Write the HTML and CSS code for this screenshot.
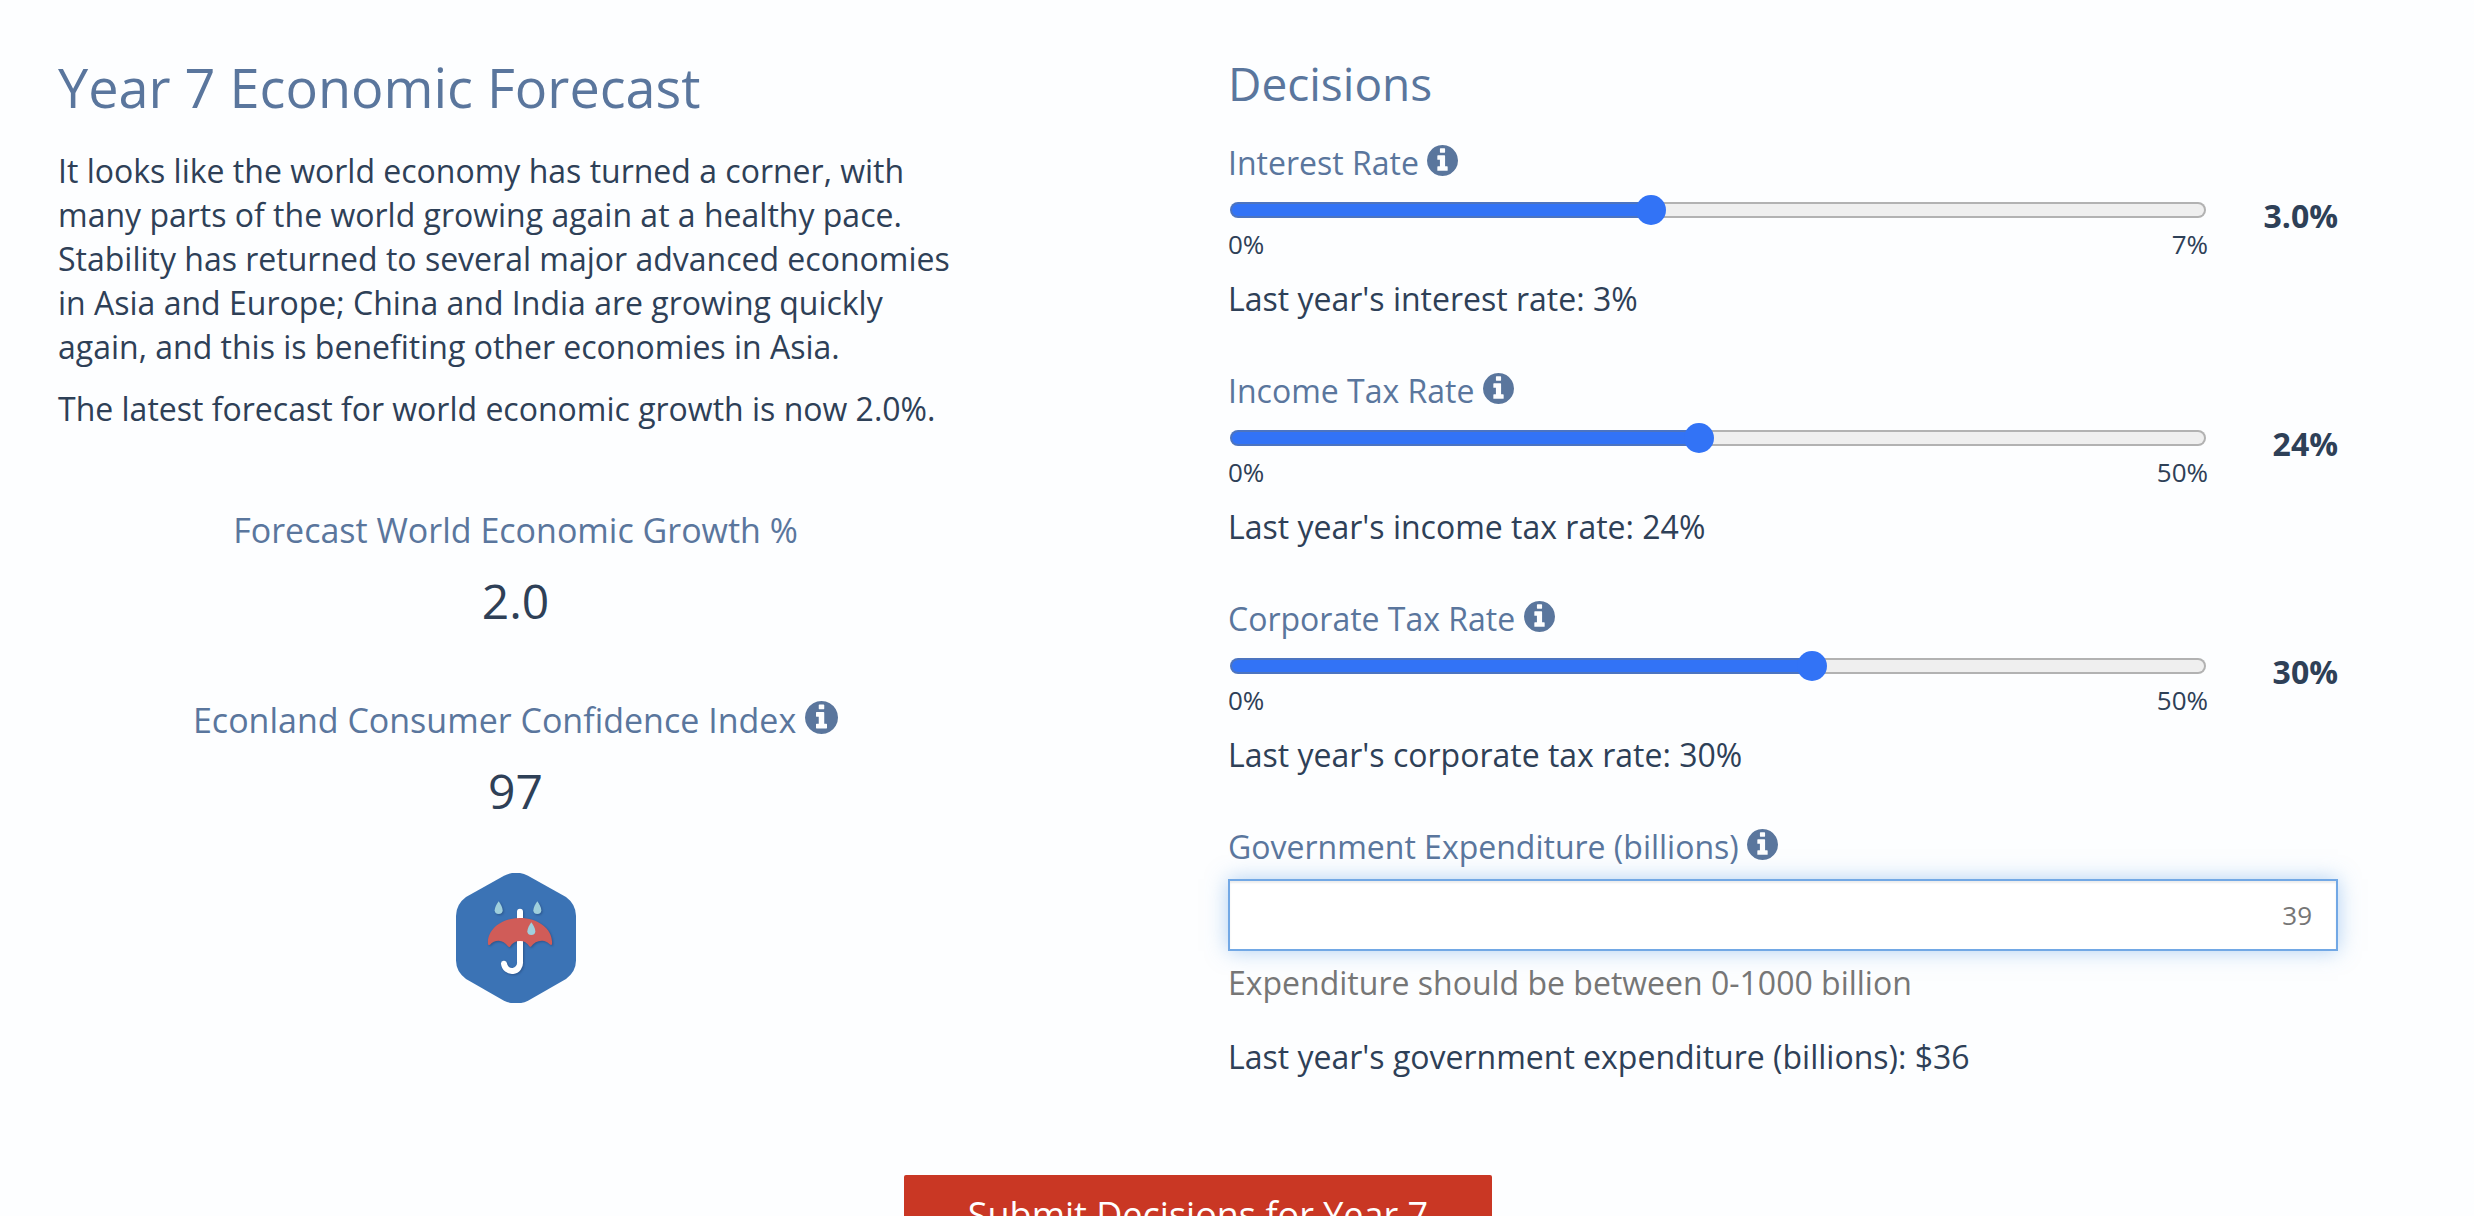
FILE: index.html
```html
<!DOCTYPE html>
<html lang="en">
<head>
<meta charset="utf-8">
<meta name="viewport" content="width=device-width, initial-scale=1">
<title>Year 7 Decisions</title>
<link rel="stylesheet" href="styles.css">
</head>
<body>
<svg class="sprite" aria-hidden="true">
  <symbol id="info" viewBox="0 128 1536 1536">
    <path d="M1024 1376v-160q0-14-9-23t-23-9h-96v-512q0-14-9-23t-23-9h-320q-14 0-23 9t-9 23v160q0 14 9 23t23 9h96v320h-96q-14 0-23 9t-9 23v160q0 14 9 23t23 9h448q14 0 23-9t9-23zm-128-896v-160q0-14-9-23t-23-9h-192q-14 0-23 9t-9 23v160q0 14 9 23t23 9h192q14 0 23-9t9-23zm640 416q0 209-103 385.5t-279.5 279.5-385.5 103-385.5-103-279.5-279.5-103-385.5 103-385.5 279.5-279.5 385.5-103 385.5 103 279.5 279.5 103 385.5z"/>
  </symbol>
</svg>
<main class="page">
  <form class="round">
    <section class="forecast">
      <h1 class="forecast-title">Year 7 Economic Forecast</h1>
      <p class="text">It looks like the world economy has turned a corner, with many parts of the world growing again at a healthy pace. Stability has returned to several major advanced economies in Asia and Europe; China and India are growing quickly again, and this is benefiting other economies in Asia.</p>
      <p class="text">The latest forecast for world economic growth is now 2.0%.</p>
      <div class="indicator">
        <h2 class="indicator-name">Forecast World Economic Growth %</h2>
        <p class="indicator-value">2.0</p>
      </div>
      <div class="indicator">
        <h2 class="indicator-name">Econland Consumer Confidence Index <button type="button" class="info" aria-label="About the consumer confidence index"><svg class="info-icon"><use href="#info"/></svg></button></h2>
        <p class="indicator-value">97</p>
      </div>
      <svg class="badge" viewBox="78 66 360 390" role="img" aria-label="Rainy outlook">
        <path fill="#3b73b5" d="M222 74Q258 56 294 74L408 138Q438 160 438 195V328Q438 362 408 384L294 449Q258 466 222 449L108 384Q78 362 78 328V195Q78 160 108 138Z"/>
        <g class="badge-art">
          <path fill="none" stroke="#fff" stroke-width="18" stroke-linecap="round" d="M270 182V332A24 25 0 0 1 222 338"/>
          <path fill="#d05c58" d="M174 280C170 235 215 201 270 201C325 201 370 235 366 280Q364 284 359 280Q348 268 335 269Q315 270 304 286Q301 289 298 286Q288 270 270 270Q250 270 240 287Q237 290 234 286Q222 270 206 269Q190 269 180 281Q175 284 174 280Z"/>
          <g fill="#9fcfdc">
            <path d="M206 151C211 158 218 170 218 178A12 11 0 0 1 194 178C194 170 201 158 206 151Z"/>
            <path d="M322 151C327 158 334 170 334 178A12 11 0 0 1 310 178C310 170 317 158 322 151Z"/>
            <path d="M304 214C309 221 316 233 316 241A12 11 0 0 1 292 241C292 233 299 221 304 214Z"/>
          </g>
        </g>
      </svg>
    </section>

    <section class="decisions">
      <h2 class="decisions-title">Decisions</h2>

      <div class="field">
        <div class="field-head"><label for="interest">Interest Rate</label> <button type="button" class="info" aria-label="About the interest rate"><svg class="info-icon"><use href="#info"/></svg></button></div>
        <div class="slider">
          <div class="slider-main">
            <input id="interest" class="range" type="range" min="0" max="7" step="0.1" value="3" style="--fill: 43%">
            <div class="scale"><span>0%</span><span>7%</span></div>
          </div>
          <output class="slider-value" for="interest">3.0%</output>
        </div>
        <p class="previous">Last year's interest rate: 3%</p>
      </div>

      <div class="field">
        <div class="field-head"><label for="income">Income Tax Rate</label> <button type="button" class="info" aria-label="About the income tax rate"><svg class="info-icon"><use href="#info"/></svg></button></div>
        <div class="slider">
          <div class="slider-main">
            <input id="income" class="range" type="range" min="0" max="50" value="24" style="--fill: 48%">
            <div class="scale"><span>0%</span><span>50%</span></div>
          </div>
          <output class="slider-value" for="income">24%</output>
        </div>
        <p class="previous">Last year's income tax rate: 24%</p>
      </div>

      <div class="field">
        <div class="field-head"><label for="corporate">Corporate Tax Rate</label> <button type="button" class="info" aria-label="About the corporate tax rate"><svg class="info-icon"><use href="#info"/></svg></button></div>
        <div class="slider">
          <div class="slider-main">
            <input id="corporate" class="range" type="range" min="0" max="50" value="30" style="--fill: 60%">
            <div class="scale"><span>0%</span><span>50%</span></div>
          </div>
          <output class="slider-value" for="corporate">30%</output>
        </div>
        <p class="previous">Last year's corporate tax rate: 30%</p>
      </div>

      <div class="field">
        <div class="field-head"><label for="spending">Government Expenditure (billions)</label> <button type="button" class="info" aria-label="About government expenditure"><svg class="info-icon"><use href="#info"/></svg></button></div>
        <input id="spending" class="amount" type="text" inputmode="numeric" placeholder="39" aria-describedby="spending-help">
        <p class="help" id="spending-help">Expenditure should be between 0-1000 billion</p>
        <p class="spending-previous">Last year's government expenditure (billions): $36</p>
      </div>
    </section>

    <button type="submit" class="submit">Submit Decisions for Year 7</button>
  </form>
</main>
</body>
</html>
```
FILE: styles.css
```css
:root {
  --ink: #2e4057;
  --heading: #5a769d;
  --blue: #3273f6;
  --muted: #767676;
}

* {
  box-sizing: border-box;
}

body {
  margin: 0;
  background: #fdfeff;
  color: var(--ink);
  font: 32px/44px "Open Sans", "Noto Sans", sans-serif;
}

h1,
h2,
p {
  margin: 0;
  font-weight: 400;
}

button,
input {
  font: inherit;
}

.sprite {
  display: none;
}

/* The round scrolls inside the window */
.page {
  height: 100vh;
  overflow-y: auto;
  scrollbar-width: none;
}

.round {
  display: grid;
  grid-template-columns: repeat(12, minmax(0, 1fr));
  column-gap: 60px;
  padding: 55px 136px 64px 58px;
}

.forecast {
  grid-column: 1 / span 5;
}

.decisions {
  grid-column: 7 / span 6;
}

.forecast-title {
  margin-bottom: 30px;
  color: var(--heading);
  font-size: 54px;
  line-height: 64px;
}

.text + .text {
  margin-top: 18px;
}

.indicator {
  margin-top: 63px;
  text-align: center;
}

.text + .indicator {
  margin-top: 75px;
}

.indicator-name {
  margin-bottom: 15px;
  color: var(--heading);
  font-size: 34px;
  line-height: 48px;
}

.indicator-value {
  font-size: 48px;
  line-height: 64px;
}

.badge {
  display: block;
  width: 120px;
  height: 130px;
  margin: 50px auto 0;
}

.badge-art {
  filter: drop-shadow(3px 3px 3px rgb(20 40 80 / 40%));
}

.info {
  padding: 0;
  border: 0;
  background: none;
  color: var(--heading);
  line-height: 1;
  cursor: pointer;
}

.info-icon {
  display: inline-block;
  width: 31px;
  height: 31px;
  fill: currentColor;
  vertical-align: -1px;
}

.indicator .info-icon {
  width: 33px;
  height: 33px;
}

.decisions-title {
  margin-bottom: 30px;
  color: var(--heading);
  font-size: 46px;
  line-height: 56px;
}

.field + .field {
  margin-top: 48px;
}

.field-head {
  height: 44px;
  margin-bottom: 10px;
  color: var(--heading);
}

.slider {
  display: grid;
  grid-template-columns: minmax(0, 1fr) 100px;
  column-gap: 30px;
  align-items: start;
}

.range {
  display: block;
  width: calc(100% - 4px);
  height: 30px;
  margin: 0 2px;
  appearance: none;
  background: none;
}

.range::-webkit-slider-runnable-track {
  height: 16px;
  border: 2px solid transparent;
  border-radius: 8px;
  background:
    linear-gradient(to right, var(--blue) var(--fill), #efefef var(--fill)) padding-box,
    linear-gradient(to right, #4c74c0 var(--fill), #b2b2b2 var(--fill)) border-box;
}

.range::-webkit-slider-thumb {
  width: 30px;
  height: 30px;
  margin-top: -9px;
  appearance: none;
  border-radius: 50%;
  background: var(--blue);
}

.scale {
  display: flex;
  justify-content: space-between;
  font-size: 26px;
  line-height: 38px;
}

.slider-value {
  font-weight: 700;
  line-height: 42px;
  text-align: right;
}

.previous {
  margin-top: 14px;
}

.amount {
  display: block;
  width: 100%;
  height: 72px;
  padding: 0 24px;
  border: 2px solid #72a8e5;
  border-radius: 0;
  outline: 0;
  background: #fff;
  box-shadow: inset 0 2px 2px rgb(0 0 0 / 8%), 0 0 20px rgb(102 163 230 / 50%);
  color: var(--ink);
  font-size: 26px;
  text-align: right;
}

.amount::placeholder {
  color: var(--muted);
  opacity: 1;
}

.help {
  margin-top: 10px;
  color: var(--muted);
}

.spending-previous {
  margin-top: 30px;
}

.submit {
  grid-column: 1 / -1;
  justify-self: center;
  margin-top: 96px;
  padding: 16px 64px;
  border: 0;
  border-radius: 2px;
  background: #c93724;
  color: #fff;
  font-size: 36px;
  line-height: 48px;
  cursor: pointer;
}
```
